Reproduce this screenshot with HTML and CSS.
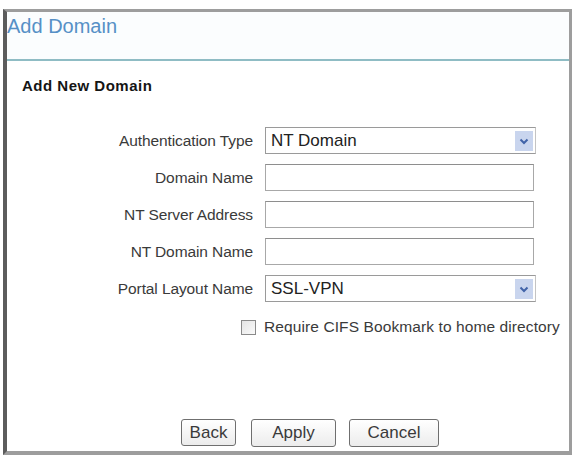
FILE: index.html
```html
<!DOCTYPE html>
<html lang="en">
<head>
    <meta charset="UTF-8">
    <title>Add Domain</title>
    <link rel="stylesheet" href="styles.css">
</head>
<body>
    <div class="frame">
        <div class="header">
            <h1 class="title">Add Domain</h1>
        </div>

        <div class="content">
            <h2 class="section-title">Add New Domain</h2>

            <div class="form-grid">
                <label class="label">Authentication Type</label>
                <div class="select">
                    <span class="select-value">NT Domain</span>
                    <span class="select-arrow">
                        <svg width="10" height="8" viewBox="0 0 10 8"><path d="M1.5 2.5 L5 6 L8.5 2.5" fill="none" stroke="#4163a8" stroke-width="2"/></svg>
                    </span>
                </div>

                <label class="label">Domain Name</label>
                <input type="text" class="text-input">

                <label class="label">NT Server Address</label>
                <input type="text" class="text-input">

                <label class="label">NT Domain Name</label>
                <input type="text" class="text-input">

                <label class="label">Portal Layout Name</label>
                <div class="select">
                    <span class="select-value">SSL-VPN</span>
                    <span class="select-arrow">
                        <svg width="10" height="8" viewBox="0 0 10 8"><path d="M1.5 2.5 L5 6 L8.5 2.5" fill="none" stroke="#4163a8" stroke-width="2"/></svg>
                    </span>
                </div>
            </div>

            <div class="check-row">
                <span class="checkbox"></span>
                <span class="check-label">Require CIFS Bookmark to home directory</span>
            </div>

            <div class="buttons">
                <button class="btn btn-back">Back</button>
                <button class="btn btn-wide">Apply</button>
                <button class="btn btn-wide btn-cancel">Cancel</button>
            </div>
        </div>
    </div>
</body>
</html>
```

FILE: styles.css
```css
body {
    margin: 0;
    padding: 0;
    background-color: #ffffff;
    font-family: "Liberation Sans", Arial, sans-serif;
    color: #333333;
}

.frame {
    margin: 9px 4px 2px 3px;
    height: 446px;
    box-sizing: border-box;
    border: 3px solid #9d9d9d;
    border-left: 4px solid #5c5c5c;
    border-bottom-width: 4px;
    display: flex;
    flex-direction: column;
    background-color: #ffffff;
}

.header {
    height: 49px;
    box-sizing: border-box;
    border-bottom: 2px solid #8fbcc4;
    background-color: #fbfdfe;
}

.title {
    margin: 0;
    padding-top: 2px;
    font-size: 20px;
    font-weight: normal;
    line-height: 24px;
    color: #5690c6;
}

.content {
    flex: 1;
    display: flex;
    flex-direction: column;
}

.section-title {
    margin: 16px 0 0 15px;
    font-size: 15px;
    font-weight: bold;
    line-height: 18px;
    letter-spacing: 0.5px;
    color: #151515;
}

.form-grid {
    display: grid;
    grid-template-columns: 246px 271px;
    grid-auto-rows: 27px;
    column-gap: 12px;
    row-gap: 10px;
    margin-top: 32px;
}

.label {
    font-size: 15.5px;
    text-align: right;
    align-self: center;
    color: #3a3a3a;
    letter-spacing: -0.1px;
}

.text-input {
    width: 269px;
    height: 27px;
    margin: 0;
    padding: 0;
    box-sizing: border-box;
    border: 1px solid #a8a8a8;
    border-top-color: #8e8e8e;
    background-color: #ffffff;
}

.select {
    height: 27px;
    box-sizing: border-box;
    border: 1px solid #9a9a9a;
    border-right-color: #c4c4c4;
    display: flex;
    align-items: center;
    justify-content: space-between;
    padding: 0 2px 0 5px;
    background-color: #ffffff;
}

.select-value {
    font-size: 17px;
    color: #222222;
}

.select-arrow {
    width: 18px;
    height: 20px;
    background-color: #c9d5ee;
    display: flex;
    align-items: center;
    justify-content: center;
}

.check-row {
    display: flex;
    align-items: center;
    gap: 8px;
    margin: 16px 0 0 234px;
}

.checkbox {
    width: 13px;
    height: 13px;
    border: 1px solid #8a8a8a;
    background: linear-gradient(135deg, #e4e4e4, #fafafa);
}

.check-label {
    font-size: 15.5px;
    color: #3a3a3a;
    letter-spacing: 0.1px;
}

.buttons {
    display: flex;
    align-items: flex-end;
    margin: auto 0 4px 174px;
}

.btn {
    height: 28px;
    padding: 0;
    font-family: "Liberation Sans", Arial, sans-serif;
    font-size: 17px;
    color: #3a3a3a;
    border: 1px solid #6f6f6f;
    border-radius: 3px;
    background: linear-gradient(#ffffff, #ececec);
}

.btn-back {
    width: 55px;
    height: 27px;
    margin-right: 15px;
    margin-bottom: 1px;
}

.btn-wide {
    width: 85px;
}

.btn-cancel {
    width: 90px;
    margin-left: 13px;
}
```
